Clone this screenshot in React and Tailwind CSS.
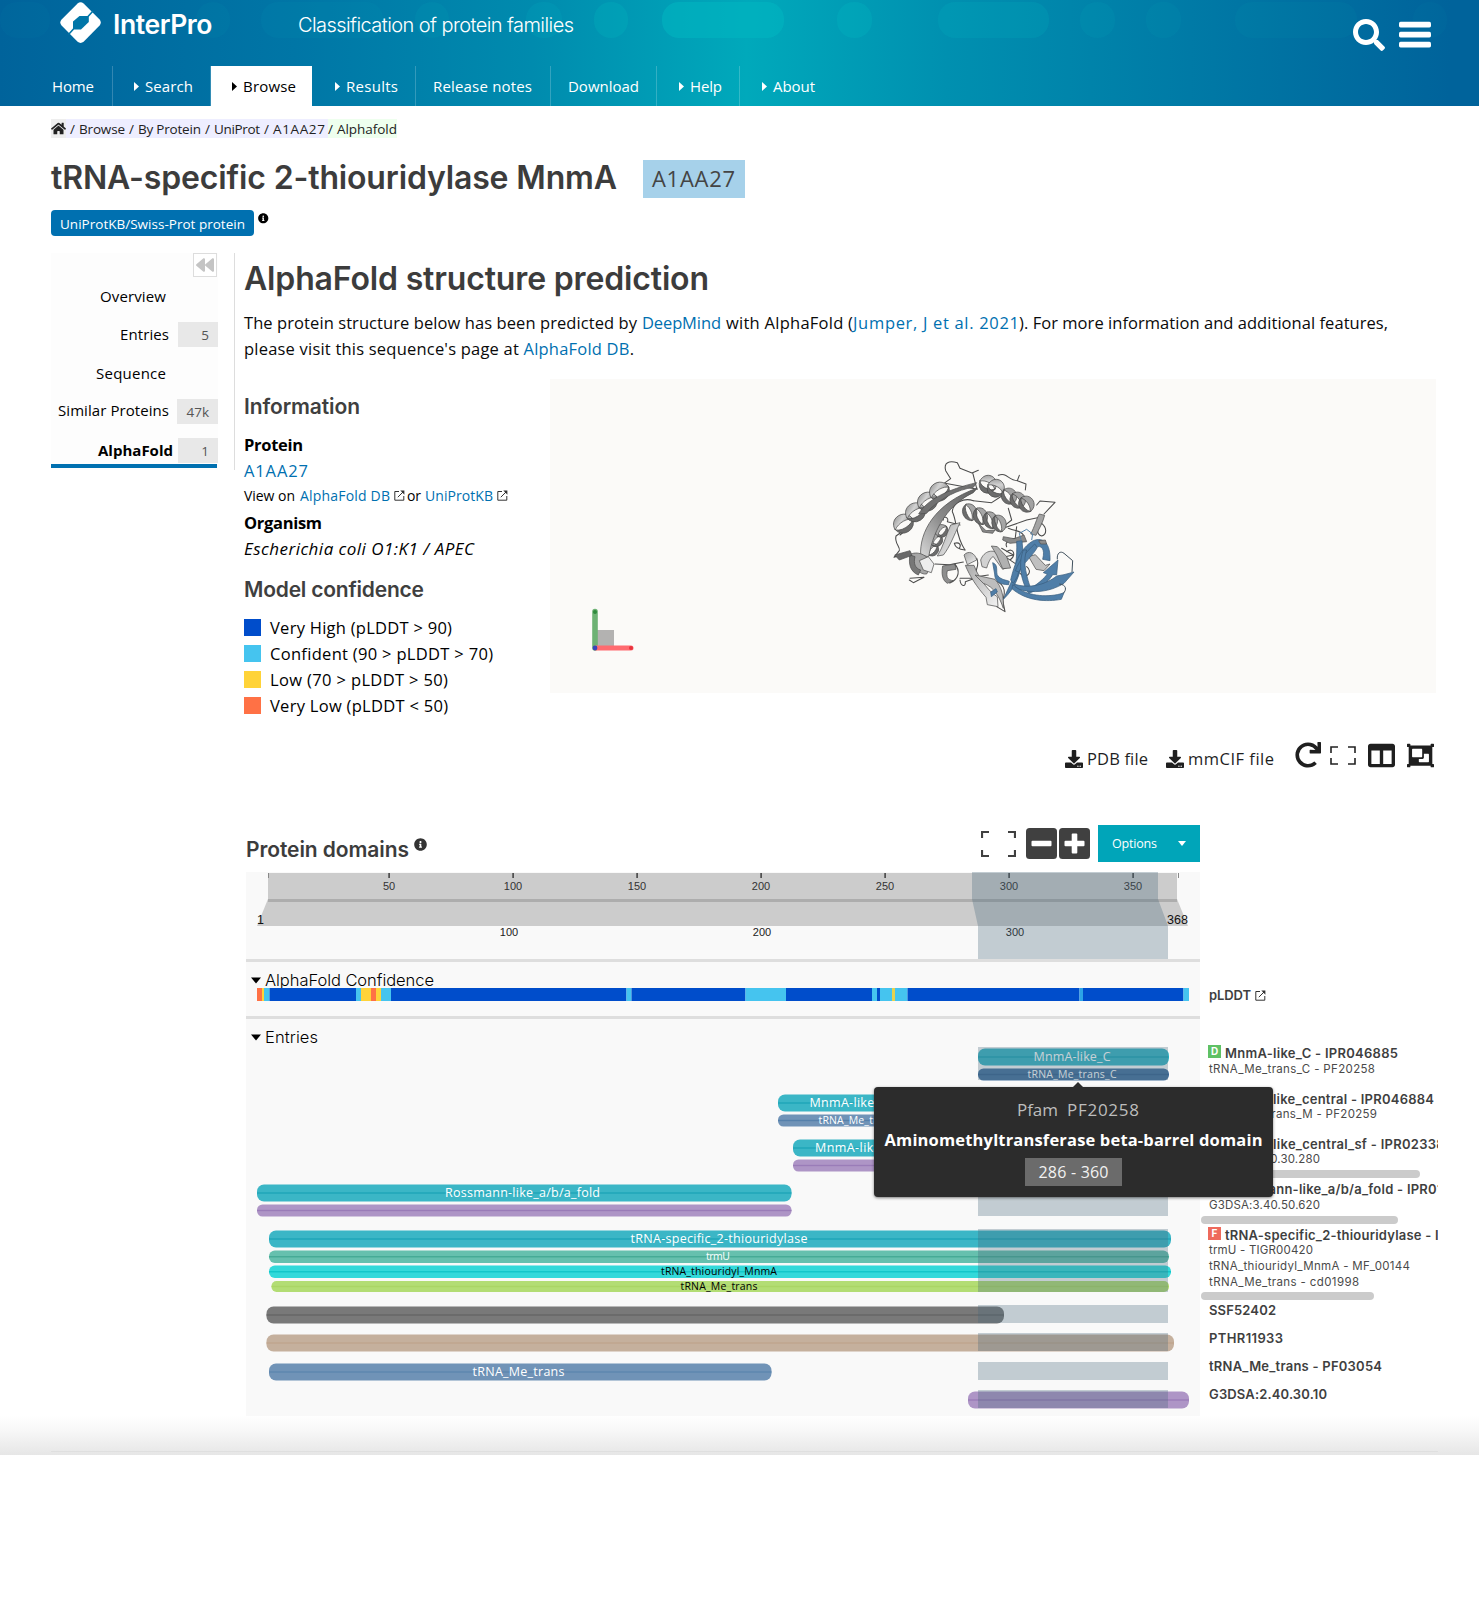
import { useLayoutEffect, useRef } from "react";
import { FaHome, FaInfoCircle, FaSearch, FaBackward, FaDownload, FaRedo, FaColumns, FaObjectGroup } from "react-icons/fa";

// Text run whose letter spacing is adjusted to a given measure.
function Fit({ w, className = "", children }) {
  const ref = useRef(null);
  useLayoutEffect(() => {
    const el = ref.current;
    el.style.letterSpacing = "0px";
    const n = Math.max(1, el.textContent.length - 1);
    const gap = (w - el.getBoundingClientRect().width) / n;
    el.style.letterSpacing = `${gap}px`;
    el.style.marginRight = `${-gap}px`;
  }, [w]);
  return (
    <span ref={ref} className={"inline-block whitespace-nowrap " + className}>
      {children}
    </span>
  );
}

const plex = "font-['Open_Sans',sans-serif]";
const inter = "font-['Inter',sans-serif]";

function Logo() {
  return (
    <svg width="42" height="42" viewBox="0 0 42 42" className="block">
      <path d="M17.6 1.6 Q20.5 -1 23.6 1.6 L39.6 17.6 Q42 20.5 39.6 23.6 L23.6 39.8 Q20.5 42 17.6 39.8 L1.6 23.6 Q-1 20.5 1.6 17.6 Z" fill="#fff" />
      <path d="M13 19.5 L19.5 14 L28.8 14 L28.8 20 L21 27.5 L13 27.5 Z" fill="#0076a8" />
      <path d="M28 14.5 L33 9 M13.5 27 L8.5 32.5" stroke="#0076a8" strokeWidth="1.6" />
    </svg>
  );
}

const PILLS = [
  [0, 50, 0.05], [196, 34, 0.08], [261, 122, 0.09], [415, 34, 0.14], [526, 36, 0.2], [594, 34, 0.35], [662, 122, 0.75],
  [837, 35, 0.4], [938, 111, 0.25], [1080, 35, 0.14], [1146, 35, 0.12], [1235, 122, 0.08], [1413, 34, 0.06],
];

const NAV = [
  { label: "Home", w: 42, box: "w-[79px] pl-[18px]" },
  { label: "Search", w: 48, box: "w-[98px] pl-[21px]", arrow: true },
  { label: "Browse", w: 53, box: "w-[101px] pl-[21px] bg-white text-black", arrow: true },
  { label: "Results", w: 52, box: "w-[104px] pl-[23px]", arrow: true },
  { label: "Release notes", w: 99, box: "w-[135px] pl-[17px]" },
  { label: "Download", w: 71, box: "w-[106px] pl-[17px]" },
  { label: "Help", w: 32, box: "w-[83px] pl-[22px]", arrow: true },
  { label: "About", w: 42, box: "w-[90px] pl-[22px] border-r-0", arrow: true },
];

function Header() {
  return (
    <header className="relative h-[106px] overflow-hidden bg-[linear-gradient(91deg,#00639b_0%,#0076a6_20%,#008bae_36%,#00a9bb_50.5%,#0090b0_64%,#0078a5_82%,#00639b_98%)] text-white">
      <div className="absolute inset-0">
        {PILLS.map(([x, w, o]) => (
          <span key={x} className="absolute top-[2px] h-[36px] rounded-[17px] bg-[#00b6c0]" style={{ left: x, width: w, opacity: o * 0.75 }} />
        ))}
      </div>
      <div className="relative flex h-[66px] items-start pl-[60px]">
        <div className="pt-[2px]"><Logo /></div>
        <div className={"ml-[11px] w-[185px] pt-[8px] text-[26.5px] leading-[33px] font-semibold " + inter}>
          <Fit w={99.5}>InterPro</Fit>
        </div>
        <div className={"pt-[9px] text-[20px] leading-[32px] font-light " + inter}>
          <Fit w={276}>Classification of protein families</Fit>
        </div>
        <div className="ml-auto flex pr-[48px]">
          <FaSearch className="mt-[19px] h-[32px] w-[32px]" />
          <svg width="32" height="27" viewBox="0 0 32 27" className="mt-[21px] ml-[14px]" fill="#fff">
            <rect y="0.8" width="32" height="5.6" rx="1.6" />
            <rect y="10.8" width="32" height="5.6" rx="1.6" />
            <rect y="20.8" width="32" height="5.6" rx="1.6" />
          </svg>
        </div>
      </div>
      <nav className={"relative flex h-[40px] pl-[34px] text-[15px] leading-[42px] " + plex}>
        {NAV.map((n) => (
          <a key={n.label} className={"flex items-center border-r border-white/20 " + n.box}>
            {n.arrow && (
              <svg width="5" height="9" viewBox="0 0 5 9" className="mr-[6px]" fill="currentColor"><path d="M0 0 L5 4.5 L0 9 Z" /></svg>
            )}
            <Fit w={n.w}>{n.label}</Fit>
          </a>
        ))}
      </nav>
    </header>
  );
}

const Slash = () => <span className="w-[13px] text-center">/</span>;

function Breadcrumb() {
  return (
    <div className={"mt-[13px] flex h-[19px] text-[13.5px] leading-[20px] text-[#222] " + plex}>
      <span className="flex w-[15px] items-center bg-[#eee]"><FaHome className="size-[15px]" /></span>
      <span className="flex w-[262px] bg-[#eef]">
        <Slash /><Fit w={46}>Browse</Fit>
        <Slash /><Fit w={63}>By Protein</Fit>
        <Slash /><Fit w={46}>UniProt</Fit>
        <Slash /><Fit w={52}>A1AA27</Fit>
      </span>
      <span className="flex bg-[#efe]"><span className="w-[9px]">/</span><Fit w={60}>Alphafold</Fit></span>
    </div>
  );
}

const Count = ({ children, w = "w-[40px]" }) => (
  <span className={"h-[25px] bg-[#e8e8e8] pr-[9px] text-right text-[13.5px] leading-[26px] text-[#555] " + w}>{children}</span>
);

function Sidebar() {
  return (
    <aside className={"h-[217px] w-[184px] border-r border-[#ddd] pr-[16px] text-[15px] leading-[26px] text-black " + plex}>
      <div className="h-full bg-[#fdfdfd]">
        <button className="ml-[142px] flex size-[24px] items-center justify-center border border-[#ddd] bg-white text-[#c4c4c4]">
          <FaBackward className="size-[18px]" />
        </button>
        <div className="mt-[6px] flex h-[26px] justify-end pr-[52px]"><Fit w={66}>Overview</Fit></div>
        <div className="mt-[12px] flex h-[26px] justify-end gap-[9px]"><Fit w={49}>Entries</Fit><span className="flex pt-px"><Count>5</Count></span></div>
        <div className="mt-[13px] flex h-[26px] justify-end pr-[52px]"><Fit w={70}>Sequence</Fit></div>
        <div className="mt-[11px] flex h-[26px] justify-end gap-[8px]"><Fit w={111}>Similar Proteins</Fit><span className="flex pt-[2px]"><Count w="w-[41px]">47k</Count></span></div>
        <div className="mt-[14px] flex h-[26px] justify-end gap-[5px] font-bold"><Fit w={75}>AlphaFold</Fit><span className="flex pt-px font-normal"><Count>1</Count></span></div>
        <div className="mt-px h-[4px] w-[166px] bg-[#0070b0]" />
      </div>
    </aside>
  );
}

const Ext = ({ className = "" }) => (
  <svg width="11" height="11" viewBox="0 0 11 11" fill="none" stroke="#333" className={"inline-block " + className}>
    <path d="M5 1.5 H0.8 V10.2 H9.8 V6" strokeWidth="1" />
    <path d="M3.8 7.2 L9.5 1.5" strokeWidth="1" />
    <path d="M6.3 0.6 H10.4 V4.7 Z" fill="#333" stroke="none" />
  </svg>
);

const LEGEND = [
  ["bg-[#004dcb]", "Very High (pLDDT > 90)", 182],
  ["bg-[#45c4ef]", "Confident (90 > pLDDT > 70)", 223],
  ["bg-[#ffd338]", "Low (70 > pLDDT > 50)", 178],
  ["bg-[#ff7145]", "Very Low (pLDDT < 50)", 178],
];

function Info() {
  const h = "text-[21px] leading-[28px] font-semibold text-[#3f3f3f] " + inter;
  const link = "text-[#0070b0]";
  return (
    <div className={"w-[306px] pt-[14px] text-[16.5px] leading-[26px] text-black " + plex}>
      <h3 className={h}><Fit w={116}>Information</Fit></h3>
      <div className="mt-[11px] font-bold"><Fit w={59}>Protein</Fit></div>
      <div className={link}><Fit w={64}>A1AA27</Fit></div>
      <div className="flex text-[14px] leading-[24px]">
        <Fit w={51}>View on</Fit>
        <Fit w={90} className={"ml-[5px] " + link}>AlphaFold DB</Fit>
        <Ext className="mt-[6px] ml-[4px]" />
        <Fit w={14} className="ml-[2px]">or</Fit>
        <Fit w={68} className={"ml-[4px] " + link}>UniProtKB</Fit>
        <Ext className="mt-[6px] ml-[4px]" />
      </div>
      <div className="mt-[2px] font-bold"><Fit w={78}>Organism</Fit></div>
      <div className="text-[17px] italic"><Fit w={230}>Escherichia coli O1:K1 / APEC</Fit></div>
      <h3 className={"mt-[14px] mb-[10px] " + h}><Fit w={180}>Model confidence</Fit></h3>
      {LEGEND.map(([c, t, w]) => (
        <div key={t} className="flex h-[26px] items-start">
          <span className={"mt-[5px] mr-[9px] size-[17px] " + c} />
          <Fit w={w} className="pt-px">{t}</Fit>
        </div>
      ))}
    </div>
  );
}

// One turn per centre point: dark far side, then a tapering light near side.
function Helix({ turns, rx, ry, tilt = 0, fill = "url(#coil)" }) {
  return turns.map(([x, y]) => (
    <g key={x + "-" + y} transform={`translate(${x} ${y}) rotate(${tilt})`} stroke="#4a4a4a" strokeWidth="2" strokeLinejoin="round">
      <path d={`M${-rx} 0 A${rx} ${ry} 0 0 0 ${rx} 0 A${rx} ${ry * 0.5} 0 0 1 ${-rx} 0 Z`} fill="#6c6c6c" />
      <path d={`M${-rx} 4 C${-rx} ${-ry * 1.3} ${rx} ${-ry * 1.3} ${rx} 6 C${rx * 0.7} ${-ry * 0.25} ${-rx * 0.4} ${-ry * 0.35} ${-rx} 4 Z`} fill={fill} />
    </g>
  ));
}

const LOOPS = [
  "M252 130 L272 116 L257 92 C250 66 268 62 292 68 L300 85 L336 99 L355 91 M338 98 L350 145",
  "M352 148 L300 138 L255 130",
  "M415 106 C440 95 445 122 472 122 L478 106 M472 122 L498 132 L496 150",
  "M530 195 L540 183 L585 187 L552 222",
  "M545 250 C560 262 562 282 545 288 C528 282 530 262 545 250",
  "M150 258 L108 288 C102 310 122 320 118 332 L102 352 L150 338",
  "M120 285 L140 268",
  "M150 415 L192 412 L160 428 L148 420",
  "M340 182 C310 172 278 190 277 215 C292 245 285 285 315 330",
  "M340 182 L395 188 L430 165",
  "M315 330 C295 328 285 320 283 310 C298 305 305 315 298 325",
  "M225 372 L268 374 L310 366",
  "M300 420 C302 440 318 442 316 425 L345 415 L300 415",
  "M250 240 C245 225 270 232 262 245 L300 255",
  "M445 205 L455 240 L430 260 M438 262 L500 240 L540 232",
  "M440 320 C430 300 470 290 480 300 M425 325 L460 345 L435 350 L465 370 M440 335 C460 320 470 345 450 360",
  "M350 355 C362 380 340 390 350 410 L385 405",
  "M470 260 L465 300 M480 400 C500 420 520 395 500 380",
  "M395 420 C430 425 440 450 428 480 L435 515 L410 500",
  "M445 265 C470 275 480 270 490 285",
];

function Protein() {
  return (
    <svg width="240" height="190" viewBox="0 0 720 570" className="block">
      <defs>
        <linearGradient id="strand" x1="0" y1="1" x2="1" y2="0">
          <stop offset="0" stopColor="#d8d8d8" />
          <stop offset="0.45" stopColor="#8b8b8b" />
          <stop offset="1" stopColor="#5e5e5e" />
        </linearGradient>
        <linearGradient id="pale" x1="0" y1="0" x2="1" y2="1">
          <stop offset="0" stopColor="#a9a9a9" />
          <stop offset="1" stopColor="#f3f3f3" />
        </linearGradient>
        <linearGradient id="coil" x1="0" y1="0" x2="1" y2="1">
          <stop offset="0" stopColor="#8c8c8c" />
          <stop offset="0.5" stopColor="#d2d2d2" />
          <stop offset="1" stopColor="#9a9a9a" />
        </linearGradient>
      </defs>
      <g fill="none" stroke="#4c4c4c" strokeWidth="3.2" strokeLinejoin="round" strokeLinecap="round">
        {LOOPS.map((d) => <path key={d} d={d} />)}
      </g>
      <Helix turns={[[130, 250], [166, 216], [202, 184], [238, 154]]} rx={31} ry={29} tilt={-32} />
      <Helix turns={[[384, 132], [408, 144]]} rx={26} ry={28} tilt={28} />
      <Helix turns={[[448, 168], [474, 180], [500, 192]]} rx={25} ry={24} tilt={55} fill="#a2a2a2" />
      <Helix turns={[[330, 216], [362, 228], [392, 240], [418, 250]]} rx={26} ry={22} tilt={68} fill="#a6a6a6" />
      <Helix turns={[[216, 328], [228, 300], [244, 272]]} rx={20} ry={20} tilt={-50} fill="#a9a9a9" />
      <g stroke="#505050" strokeWidth="2.2" strokeLinejoin="round">
        <path d="M176 222 C200 180 262 148 350 128 L340 142 C290 150 250 172 212 205 L200 220 Z" fill="#717171" />
        <path d="M182 346 C178 278 222 190 352 144 L340 158 C270 190 222 260 206 350 Z" fill="url(#strand)" />
        <path d="M232 348 C250 320 256 290 272 255 L300 248 C280 290 270 320 250 345 Z" fill="url(#pale)" />
        <path d="M148 345 C170 330 205 345 215 372 L200 402 C180 405 160 385 148 345 Z" fill="#a6a6a6" />
        <path d="M150 345 C145 370 150 395 175 405 L182 390 C165 385 160 370 165 350 Z" fill="#777" />
        <path d="M178 362 L205 350 L222 372 L214 398 L190 390 Z" fill="#ededed" />
        <path d="M104 345 L150 332 L156 346 L118 360 Z" fill="#696969" />
        <path d="M248 378 L285 372 L288 388 L262 392 C258 410 262 420 280 422 L262 430 C246 420 244 400 248 378 Z" fill="#8e8e8e" />
        <path d="M284 372 C300 390 300 415 268 430" fill="none" strokeWidth="3.4" />
        <path d="M312 345 C325 330 345 338 350 360 L322 374 Z" fill="url(#pale)" />
        <path d="M316 376 L342 376 C358 420 392 460 412 470 L414 500 L382 494 L378 472 C350 440 330 410 316 376 Z" fill="url(#pale)" />
        <path d="M345 405 L405 418 C425 440 432 470 430 505 C418 470 402 440 370 430 Z" fill="#bdbdbd" />
        <path d="M362 360 C372 332 400 325 420 345 L448 380 L428 388 L400 350 C392 352 386 365 380 384 L366 380 Z" fill="#d2d2d2" />
        <path d="M394 318 L412 320 L440 350 L452 384 L428 386 L410 345 Z" fill="#b1b1b1" />
        <path d="M512 282 C524 260 530 235 538 222 L554 226 C548 250 536 268 528 286 Z" fill="#a4a4a4" />
        <path d="M506 350 L526 344 L556 376 L570 372 L552 392 L528 388 Z" fill="#c0c0c0" />
        <path d="M430 290 L462 296 L492 285 L500 305 L450 310 L428 300 Z" fill="#8a8a8a" />
        <path d="M355 250 L378 272 L405 270 L398 280 L368 276 Z" fill="#888" />
      </g>
      <g stroke="#3a5f80" strokeWidth="2.2" strokeLinejoin="round" fill="#4f7ea8">
        <path d="M398 368 C418 375 405 398 414 408 C424 420 440 420 448 424 L446 434 C420 434 404 424 404 402 Z" />
        <path d="M470 304 L486 302 L490 350 C480 400 470 440 430 478 L452 430 C466 400 472 350 470 304 Z" />
        <path d="M452 420 C468 350 492 318 520 302 C550 290 572 310 570 362 L548 358 C556 326 544 314 526 322 C500 335 484 365 472 410 L460 430 Z" />
        <path d="M532 322 C520 345 490 370 476 396 L466 392 C480 356 505 330 524 312 Z" />
        <path d="M500 330 C490 360 494 390 510 440 L496 442 C478 400 478 360 490 330 Z" />
        <path d="M500 450 C532 436 552 415 562 402 L550 398 L594 360 L590 404 L578 404 C562 430 535 450 506 460 Z" />
        <path d="M462 432 C510 448 560 432 590 408 L612 404 L642 396 L612 430 C570 456 520 462 468 446 Z" />
        <path d="M458 434 C500 470 560 472 600 462 L612 458 L604 478 C560 486 500 484 456 446 Z" />
        <path d="M392 456 L408 446 L412 456 L394 470 Z" />
        <path d="M536 302 L556 300 L560 312 L542 312 Z" fill="#8b8b8b" stroke="#555" />
      </g>
      <g fill="none" stroke="#3f4f5c" strokeWidth="3">
        <path d="M592 358 C590 338 602 332 612 340 L638 362 L636 396" />
        <path d="M598 432 C620 434 620 450 610 460" />
        <path d="M484 302 L478 280 L500 268 L518 282 L515 300" stroke="#5583aa" />
      </g>
    </svg>
  );
}

function Viewer() {
  return (
    <div className="relative h-[314px] w-[886px] bg-[#fbfaf8]">
      <div className="pt-[61px] pl-[310px]"><Protein /></div>
      <svg width="46" height="48" viewBox="0 0 46 48" className="absolute top-[226px] left-[40px]">
        <rect x="7" y="25" width="17" height="17" fill="#b3b2b1" />
        <path d="M5 6.5 V43" stroke="#6db274" strokeWidth="5.6" strokeLinecap="round" />
        <circle cx="5" cy="7" r="2" fill="#2f8a3c" />
        <path d="M6 43 H41" stroke="#ff6b70" strokeWidth="5" strokeLinecap="round" />
        <circle cx="41" cy="43" r="2" fill="#e8323d" />
        <circle cx="5" cy="43" r="2.4" fill="#3945b8" />
      </svg>
    </div>
  );
}

const Expand = ({ w, h, sw, className, color = "#222" }) => (
  <svg width={w} height={h} viewBox={`0 0 ${w} ${h}`} fill="none" stroke={color} strokeWidth={sw} className={className}>
    <path d={`M1 7 V1 H8 M${w - 8} 1 H${w - 1} V7 M${w - 1} ${h - 7} V${h - 1} H${w - 8} M8 ${h - 1} H1 V${h - 7}`} />
  </svg>
);

function Toolbar() {
  return (
    <div className={"mt-[24px] flex h-[26px] justify-end pr-[2px] text-[16.5px] leading-[34px] text-[#1f1f1f] " + plex}>
      <FaDownload className="mt-[8px] size-[18px]" />
      <Fit w={61} className="ml-[4px]">PDB file</Fit>
      <FaDownload className="mt-[8px] ml-[18px] size-[18px]" />
      <Fit w={86} className="ml-[4px]">mmCIF file</Fit>
      <FaRedo className="ml-[21px] size-[26px]" />
      <Expand w={26} h={19} sw={1.6} className="mt-[4px] ml-[9px]" />
      <FaColumns className="ml-[12px] size-[27px]" />
      <FaObjectGroup className="ml-[12px] size-[27px]" />
    </div>
  );
}

const SquareIcon = ({ plus, className = "" }) => (
  <svg width="31" height="31" viewBox="0 0 31 31" className={className}>
    <rect width="31" height="31" rx="3.5" fill="#404040" />
    <rect x="5.5" y="12.7" width="20" height="5.6" rx="1" fill="#fff" />
    {plus && <rect x="12.7" y="5.5" width="5.6" height="20" rx="1" fill="#fff" />}
  </svg>
);

// Left x, right x, top y, height, colour, line colour, label, label centre, label width, label size, label colour
const BARS = [
  [978, 1169, 1048.5, 17, "#3bb6c6", "#1fa5b8", "MnmA-like_C", 1072, 77, 12.5, "#fff"],
  [978, 1169, 1068.5, 12, "#47739e", "#3a6592", "tRNA_Me_trans_C", 1072, 89, 10.5, "#fff"],
  [778, 978, 1094.5, 17, "#3bb6c6", "#1fa5b8", "MnmA-like_central", 866, 113, 12.5, "#fff"],
  [778, 978, 1114.5, 12, "#7093b7", "#5580ab", "tRNA_Me_trans_M", 864, 91, 10.5, "#fff"],
  [793, 969, 1139.5, 17, "#3bb6c6", "#1fa5b8", "MnmA-like_central_sf", 881, 132, 12.5, "#fff"],
  [793, 969, 1159.5, 12, "#ae95c6", "#9a7cb8"],
  [257, 791.5, 1184.5, 17, "#3bb6c6", "#1fa5b8", "Rossmann-like_a/b/a_fold", 522.5, 155, 12.5, "#fff"],
  [257, 791.5, 1204.5, 12, "#ae95c6", "#9a7cb8"],
  [269, 1171, 1230.5, 17, "#3bb6c6", "#1fa5b8", "tRNA-specific_2-thiouridylase", 719, 177, 12.5, "#fff"],
  [269, 1169, 1250.5, 12.5, "#66c0ae", "#45ab95", "trmU", 718, 24, 10.5, "#fff"],
  [269, 1171, 1265.5, 12.5, "#33d9da", "#12c6c8", "tRNA_thiouridyl_MnmA", 719, 116, 10.5, "#000"],
  [271.5, 1169, 1281, 11, "#b3dd74", "#aad665", "tRNA_Me_trans", 719, 77, 10.5, "#000"],
  [266.5, 1004, 1306.5, 17, "#797979", "#656565"],
  [266.5, 1174, 1334.5, 17, "#c5b09d", "#bfa58e"],
  [269, 771.5, 1363.5, 17, "#7093b7", "#5d86ae", "tRNA_Me_trans", 518.5, 92, 12.5, "#fff"],
  [968, 1189, 1391.5, 17, "#ae95c6", "#9a7cb8"],
];

const HIGHLIGHTS = [[1047, 33], [1092, 35], [1138, 34], [1183, 33], [1229, 63], [1305, 18], [1333, 18], [1362, 18], [1390, 18]];

const CONF = [
  [257, "#ff7145"], [262, "#ffd338"], [264, "#45c4ef"], [269.5, "#004dcb"], [356, "#45c4ef"], [361, "#ffd338"], [371, "#ff7145"],
  [376, "#ffd338"], [381, "#45c4ef"], [391, "#004dcb"], [626.5, "#45c4ef"], [631.5, "#004dcb"], [745.5, "#45c4ef"],
  [786, "#004dcb"], [872, "#45c4ef"], [877, "#004dcb"], [880, "#45c4ef"], [892, "#e6d24e"], [895, "#45c4ef"], [907.5, "#004dcb"],
  [1079.5, "#2ca4e6"], [1083, "#004dcb"], [1183.5, "#45c4ef"], [1189],
];

function Chart() {
  const hl = { fill: "#47677a", fillOpacity: 0.31 };
  return (
    <svg width="954" height="544" viewBox="246 872 954 544" className="block shrink-0 bg-[#f9f9f9]">
      <rect x="268" y="873" width="909" height="27" fill="#ccc" />
      <path d="M268 899 L257 926 H1188 L1177 899 Z" fill="#ccc" />
      <rect x="268" y="899" width="909" height="3" fill="#adadad" />
      <path d="M268.5 873 v5 M1178.5 873 v5" stroke="#888" />
      <g fill="#333" fontFamily="Liberation Sans, sans-serif" fontSize="11" textAnchor="middle">
        {[50, 100, 150, 200, 250, 300, 350].map((t, i) => (
          <g key={t}>
            <rect x={388.4 + i * 124} y="873" width="1.4" height="5" />
            <text x={389 + i * 124} y="890">{t}</text>
          </g>
        ))}
        {[100, 200, 300].map((t, i) => <text key={t} x={509 + i * 253} y="936" fill="#222">{t}</text>)}
        <text x="260.5" y="924" fontSize="12.5" fill="#111">1</text>
        <text x="1177.5" y="924" fontSize="12.5" fill="#111">368</text>
      </g>
      <path d="M972 872 H1158 V899 L1168 926 V959 H978 V926 L972 899 Z" {...hl} />
      <rect x="246" y="959" width="954" height="3" fill="#dedede" />
      <rect x="246" y="1016" width="954" height="3" fill="#dedede" />
      <g fill="#000" fontFamily="Inter, sans-serif" fontSize="16.5" fontWeight="350">
        <path d="M251 977.5 h10 l-5 6 z M251 1034.5 h10 l-5 6 z" />
        <text x="265" y="986" textLength="169">AlphaFold Confidence</text>
        <text x="265" y="1043" textLength="53">Entries</text>
      </g>
      {CONF.slice(0, -1).map(([x, c], i) => (
        <rect key={x} x={x} y="988" width={CONF[i + 1][0] - x} height="13" fill={c} />
      ))}
      {BARS.map(([x1, x2, y, h, c, line, label, cx, tw, fs, tc]) => (
        <g key={x1 + "/" + y}>
          <rect x={x1} y={y} width={x2 - x1} height={h} rx={Math.min(7, h / 2 - 0.5)} fill={c} />
          <rect x={x1} y={y + h / 2 - 0.7} width={x2 - x1} height="1.4" fill={line} />
          {label && (
            <text x={cx - tw / 2} y={h > 14 ? y + 12 : y + 9} textLength={tw} fontFamily="Open Sans, sans-serif" fontSize={fs} fill={tc}>{label}</text>
          )}
        </g>
      ))}
      {HIGHLIGHTS.map(([y, h]) => <rect key={y} x="978" y={y} width="190" height={h} {...hl} />)}
    </svg>
  );
}

const Title = ({ w, badge, mt, children }) => (
  <div className={"flex h-[16px] pl-[9px] text-[13px] leading-[17px] font-semibold text-[#3f3f3f] " + mt}>
    {badge && (
      <span className={"mr-[4px] -ml-px flex size-[13px] shrink-0 items-center justify-center text-[10px] leading-[13px] font-bold text-white " + badge[1]}>{badge[0]}</span>
    )}
    <Fit w={w}>{children}</Fit>
  </div>
);
const Sub = ({ w, mt = "", children }) => (
  <div className={"h-[14px] pl-[9px] text-[11.5px] leading-[15px] text-[#4a4a4a] " + mt}><Fit w={w}>{children}</Fit></div>
);
const D = ["D", "bg-[#5fc165]"];
const H = ["H", "bg-[#a36a3b]"];
const F = ["F", "bg-[#ee6a5c]"];

function Labels() {
  return (
    <div className={"h-[544px] w-[238px] overflow-hidden pt-[115px] " + inter}>
      <div className="flex">
        <Title w={42}>pLDDT</Title><Ext className="mt-[3px] ml-[4px]" />
      </div>
      <Title mt="mt-[42px]" badge={D} w={173}>MnmA-like_C - IPR046885</Title>
      <Sub w={166} mt="mt-px">tRNA_Me_trans_C - PF20258</Sub>
      <Title mt="mt-[15px]" badge={D} w={209}>MnmA-like_central - IPR046884</Title>
      <Sub w={168}>tRNA_Me_trans_M - PF20259</Sub>
      <Title mt="mt-[15px]" badge={H} w={228}>MnmA-like_central_sf - IPR023382</Title>
      <Sub w={111}>G3DSA:2.30.30.280</Sub>
      <div className="mt-[4px] ml-px h-[8px] w-[219px] rounded-full bg-[#cbcbcb]" />
      <Title mt="mt-[3px]" badge={H} w={251}>Rossmann-like_a/b/a_fold - IPR014729</Title>
      <Sub w={111} mt="mt-px">G3DSA:3.40.50.620</Sub>
      <div className="mt-[4px] ml-px h-[8px] w-[197px] rounded-full bg-[#cbcbcb]" />
      <Title mt="mt-[3px]" badge={F} w={283}>tRNA-specific_2-thiouridylase - IPR004506</Title>
      <Sub w={104}>trmU - TIGR00420</Sub>
      <Sub w={201} mt="mt-[2px]">tRNA_thiouridyl_MnmA - MF_00144</Sub>
      <Sub w={150} mt="mt-[2px]">tRNA_Me_trans - cd01998</Sub>
      <div className="mt-[3px] ml-px h-[8px] w-[173px] rounded-full bg-[#cbcbcb]" />
      <Title mt="mt-[2px]" w={67}>SSF52402</Title>
      <Title mt="mt-[12px]" w={74}>PTHR11933</Title>
      <Title mt="mt-[12px]" w={173}>tRNA_Me_trans - PF03054</Title>
      <Title mt="mt-[12px]" w={118}>G3DSA:2.40.30.10</Title>
    </div>
  );
}

function Tooltip() {
  return (
    <div className={"absolute top-[215px] left-[628px] flex h-[110px] w-[399px] flex-col items-center rounded-[4px] bg-[#2c2c2c] text-[16.5px] shadow-[0_1px_3px_rgba(0,0,0,0.5)] " + plex}>
      <svg width="12" height="6" viewBox="0 0 12 6" className="absolute -top-[5px] left-[198px]"><path d="M0 6 L6 0 L12 6 Z" fill="#2c2c2c" /></svg>
      <div className="ml-[9px] pt-[9px] text-[17px] leading-[28px] text-[#bdbdbd]">
        <Fit w={41}>Pfam</Fit><Fit w={72} className="ml-[9px]">PF20258</Fit>
      </div>
      <div className="pt-[1px] leading-[30px] font-bold text-white"><Fit w={378}>Aminomethyltransferase beta-barrel domain</Fit></div>
      <div className="mt-[3px] h-[28px] w-[97px] bg-[#6b6b6b] text-center text-[16px] leading-[29px] text-[#f2f2f2]"><Fit w={70}>286 - 360</Fit></div>
    </div>
  );
}

export default function App() {
  const link = "text-[#0070b0]";
  return (
    <div className="h-[1599px] w-[1479px] overflow-hidden bg-white">
      <Header />
      <div className="pl-[51px]">
        <Breadcrumb />
        <div className="mt-[22px] flex h-[38px] items-start">
          <h1 className={"w-[592px] text-[32px] leading-[35px] font-semibold text-[#3c3c3c] " + inter}>
            <Fit w={566}>tRNA-specific 2-thiouridylase MnmA</Fit>
          </h1>
          <span className={"h-[38px] w-[102px] bg-[#a6d1ea] pl-[9px] text-[22px] leading-[37px] text-[#444] " + plex}><Fit w={83}>A1AA27</Fit></span>
        </div>
        <div className="mt-[12px] flex h-[26px] items-start">
          <span className={"h-[26px] w-[203px] rounded-[4px] bg-[#0070b0] pl-[9px] text-[13.5px] leading-[28px] text-white " + plex}>
            <Fit w={185}>UniProtKB/Swiss-Prot protein</Fit>
          </span>
          <FaInfoCircle className="mt-[3px] ml-[4px] size-[10.5px] text-black" />
        </div>
        <div className="mt-[17px] flex">
          <Sidebar />
          <main className="ml-[9px] w-[1194px]">
            <h2 className={"mt-[7px] text-[32px] leading-[38px] font-semibold text-[#3c3c3c] " + inter}>
              <Fit w={465}>AlphaFold structure prediction</Fit>
            </h2>
            <div className={"mt-[12px] text-[16.5px] leading-[26px] text-[#0a0a0a] " + plex}>
              <p className="flex">
                <Fit w={393}>The protein structure below has been predicted by</Fit>
                <Fit w={79} className={"ml-[5px] " + link}>DeepMind</Fit>
                <Fit w={127} className="ml-[5px]">with AlphaFold (</Fit>
                <Fit w={166} className={link}>Jumper, J et al. 2021</Fit>
                <Fit w={369}>). For more information and additional features,</Fit>
              </p>
              <p>
                <Fit w={390}>please visit this sequence's page at <a className={link}>AlphaFold DB</a>.</Fit>
              </p>
            </div>
            <div className="mt-[17px] flex w-[1192px]">
              <Info />
              <Viewer />
            </div>
            <div className="w-[1192px]"><Toolbar /></div>
            <div className="mt-[57px] flex h-[37px] w-[956px] items-start pl-[2px]">
              <h3 className={"pt-[11px] text-[21px] leading-[28px] font-semibold text-[#3c3c3c] " + inter}><Fit w={163}>Protein domains</Fit></h3>
              <FaInfoCircle className="mt-[13px] ml-[5px] size-[13px] text-[#333]" />
              <Expand w={35} h={26} sw={2.2} color="#404040" className="mt-[6px] ml-auto" />
              <SquareIcon className="mt-[3px] ml-[10px]" />
              <SquareIcon plus className="mt-[3px] ml-[2px]" />
              <button className={"ml-[8px] flex h-[37px] w-[102px] items-center bg-[#00a5b9] pl-[14px] text-[12.5px] text-white " + plex}>
                <Fit w={45} className="pt-px">Options</Fit>
                <svg width="8" height="5" viewBox="0 0 8 5" className="ml-[21px]"><path d="M0 0 H8 L4 5 Z" fill="#fff" /></svg>
              </button>
            </div>
            <div className="relative mt-[10px] ml-[2px] flex">
              <Chart />
              <Labels />
              <Tooltip />
            </div>
          </main>
        </div>
      </div>
      <div className="h-[39px] bg-[linear-gradient(#fff,#f8f8f8_35%,#e6e6e6)] pt-[35px] pl-[51px]">
        <div className="h-px w-[1387px] bg-[#dfdfdf]" />
      </div>
    </div>
  );
}
